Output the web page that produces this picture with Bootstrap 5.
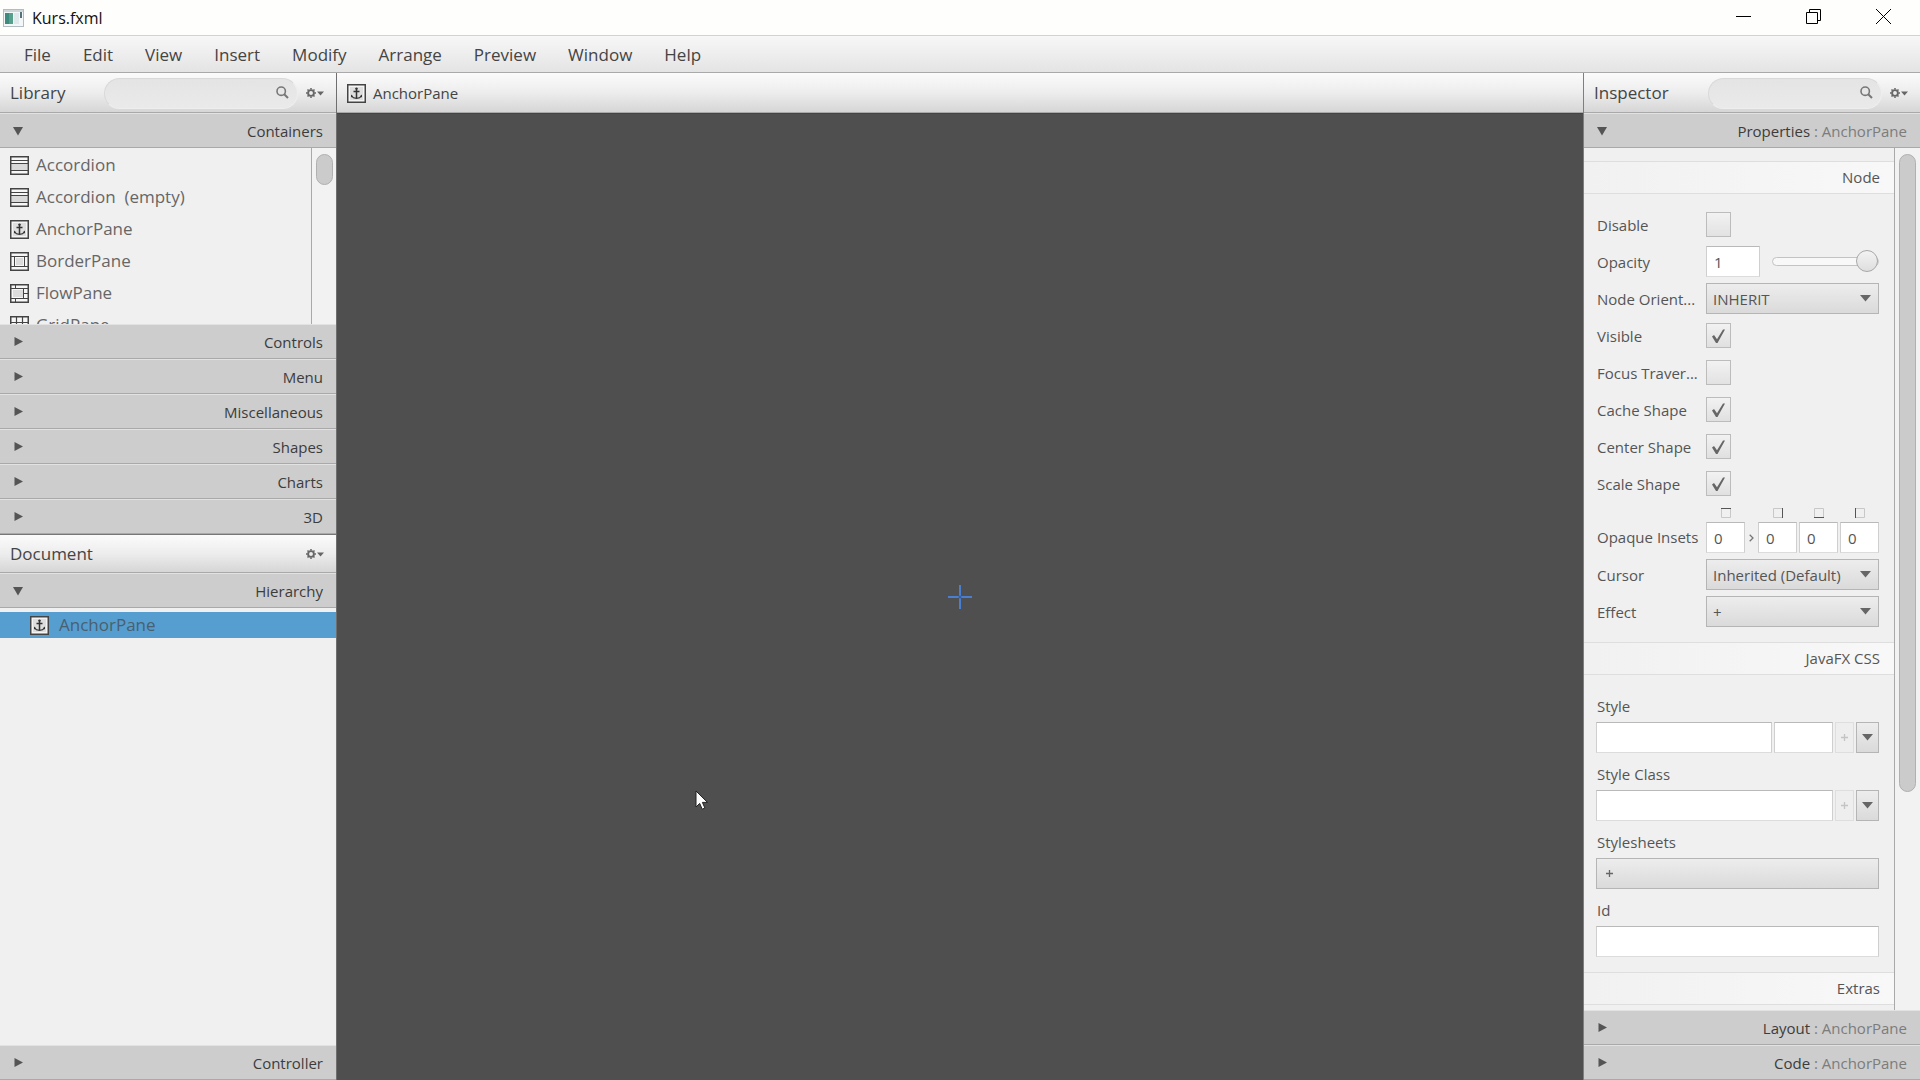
<!DOCTYPE html>
<html lang="en">
<head>
<meta charset="utf-8">
<meta name="viewport" content="width=device-width, initial-scale=1">
<title>Kurs.fxml</title>
<link href="https://cdn.jsdelivr.net/npm/bootstrap@5.3.0/dist/css/bootstrap.min.css" rel="stylesheet">
<style>
  :root { --edge:#a9a9a9; --ink:#444; --face:linear-gradient(#ededed,#dadada); }
  body { font-family:"Open Sans","Noto Sans",sans-serif; font-size:15px; line-height:20px; color:#555; background:#f0f0f0; }
  button, input, select { font-family:inherit; }
  svg { display:block; flex:none; }

  .titlebar { height:35px; background:#fefefd; color:#111; font-size:16px; padding:0 2px 0 3px; }
  .titlebar .win-btn { width:70px; height:33px; color:#000; }
  .plain-btn { border:0; background:none; padding:0; color:inherit; display:flex; align-items:center; justify-content:center; }
  .menubar { height:38px; padding:0 8px; background:linear-gradient(#f7f7f7,#e4e4e4); border-top:1px solid #d2d2d2; border-bottom:1px solid var(--edge); font-size:17px; }
  .menubar .nav-link { color:var(--ink); padding:0 16px; line-height:38px; }

  .side { width:337px; flex:none; background:#f0f0f0; }
  .side-left { border-right:1px solid #6f6f6f; }
  .side-right { border-left:1px solid #7f7f7f; }
  .panel-head { height:40px; flex:none; padding:1px 12px 0 10px; background:linear-gradient(#fbfbfb,#ededed 50%,#d6d6d6); border-bottom:1px solid var(--edge); color:var(--ink); }
  .panel-head h2 { font-size:17px; line-height:24px; font-weight:400; margin:0; }
  .panel-head.top-edge { height:39px; padding-top:0; border-top:1px solid #777; }
  .search { position:relative; width:194px; height:31px; }
  .search-right { width:174px; }
  .search input { width:100%; height:100%; border:1px solid #d9d9d9; border-bottom-color:#eee; border-right-color:#eee; border-radius:16px; background:linear-gradient(#e4e4e4,#eaeaea); padding:0 34px 0 12px; outline:0; }
  .search svg { position:absolute; right:9px; top:8px; }
  .gear { color:#666; width:18px; height:24px; }

  .section-bar { height:35px; flex:none; width:100%; border:0; border-top:1px solid #e2e2e2; border-bottom:1px solid var(--edge); background:#cdcdcd; color:#3c3c3c; padding:0 13px 0 13px; display:flex; align-items:center; justify-content:space-between; font-size:15px; line-height:20px; }
  .section-bar svg { color:#555; }
  .section-bar .target { color:#7c7c7c; }

  .library-list { height:176px; flex:none; overflow:hidden; }
  .library-list ul { padding-top:1px; font-size:17px; }
  .library-list li { height:32px; padding-left:10px; gap:7px; color:#666; white-space:pre; }
  .track { width:26px; flex:none; border-left:1px solid var(--edge); background:#f2f2f2; padding:6px 4px; }
  .library-list .track { width:25px; }
  .thumb { width:17px; border:1px solid #b0b0b0; border-radius:9px; background:#cbcbcb; }
  .thumb-lib { height:31px; }
  .thumb-insp { height:75%; }

  .tree { padding-top:4px; }
  .tree-row { height:26px; background:#569ed0; padding-left:30px; gap:10px; font-size:17px; color:#49606f; }

  .stage-head { padding-left:10px; gap:7px; font-size:15px; }
  .stage { background:#4f4f4f; position:relative; border-top:1px solid #444; }
  .pointer { position:absolute; left:28.7%; top:70%; }

  .group-title { height:33px; flex:none; margin:0; padding:0 14px; border-top:1px solid #dedede; border-bottom:1px solid #dedede; background:linear-gradient(90deg,#f1f1f1,#f8f8f8); font-size:15px; line-height:31px; font-weight:400; text-align:right; color:#555; }
  .group-title.first { margin-top:13px; }
  .props { padding:12px 15px 12px 13px; }
  .prop { height:37px; }
  .prop > label, .prop > .cap { width:109px; flex:none; white-space:nowrap; }
  .prop-tall { height:54px; align-items:flex-end; padding-bottom:3px; }
  .prop-tall > .cap { line-height:31px; }
  .field, .pick, .push { height:31px; border:1px solid #c4c4c4; border-radius:0; font-size:15px; line-height:20px; color:#555; outline:0; }
  .field { background:#fff; border-color:#b9b9b9 #cfcfcf #dcdcdc; padding:0 7px; min-width:0; }
  .field-op { width:54px; }
  .field-in { width:39px; }
  .field-unit { width:59px; flex:none; }
  .pick { flex:1; min-width:0; appearance:none; padding:0 30px 0 6px; border-color:#b5b5b5; background:url("data:image/svg+xml,%3Csvg xmlns='http://www.w3.org/2000/svg' width='11' height='7'%3E%3Cpath d='M0 0h11L5.500 6.500z' fill='%23666'/%3E%3C/svg%3E") no-repeat right 7px center, var(--face); }
  .push { background:var(--face); border-color:#b5b5b5; padding:0; display:flex; align-items:center; justify-content:center; color:#666; flex:none; }
  .push:disabled { background:#eeeeee; border-color:#dedede; color:#c4c4c4; }
  .push-add { width:19px; }
  .push-drop { width:23px; }
  .push-wide { width:100%; justify-content:flex-start; padding-left:8px; }
  .tick { appearance:none; width:25px; height:25px; margin:0; border:1px solid #bcbcbc; background:linear-gradient(#f2f2f2,#e2e2e2); }
  .tick:checked { background:url("data:image/svg+xml,%3Csvg xmlns='http://www.w3.org/2000/svg' width='13' height='14'%3E%3Cpath d='M0 7.500 2 6l3 4.200L11 .5h2L5.500 14H4z' fill='%23666'/%3E%3C/svg%3E") no-repeat center, linear-gradient(#f2f2f2,#e0e0e0); }
  .slide { appearance:none; width:107px; height:22px; margin:0 0 0 12px; background:none; }
  .slide::-webkit-slider-runnable-track { height:9px; border:1px solid #c3c3c3; border-radius:5px; background:#f8f8f8; }
  .slide::-webkit-slider-thumb { appearance:none; width:22px; height:22px; margin-top:-8px; border:1px solid #a8a8a8; border-radius:50%; background:linear-gradient(#f3f3f3,#dedede); }
  .inset { display:flex; flex-direction:column; align-items:center; gap:4px; }
  .chev { width:13px; height:31px; display:flex; align-items:center; justify-content:center; }
  .css-props { padding:10px 15px 15px 12px; }
  .css-props label, .css-props .cap { display:block; height:22px; line-height:20px; margin:11px 0 4px 1px; }
  .css-row { gap:2px; }
</style>
<script src="https://cdn.jsdelivr.net/npm/bootstrap@5.3.0/dist/js/bootstrap.bundle.min.js"></script>
</head>
<body class="vh-100 d-flex flex-column overflow-hidden">

<!-- shared symbols -->
<svg width="0" height="0" class="position-absolute" aria-hidden="true">
  <symbol id="i-anchor" viewBox="0 0 19 19"><rect x=".75" y=".75" width="17.500" height="17.500" fill="#f4f4f4" stroke="#444" stroke-width="1.500"/><rect x="3" y="3" width="13" height="13" fill="#dedede"/><path d="M9.500 4v10M6.500 7.500h6" fill="none" stroke="#333" stroke-width="1.500"/><path d="M4.500 12c1 1.600 2.800 2.300 5 2.300s4-.7 5-2.300" fill="none" stroke="#333" stroke-width="1.300"/><path d="M4 13.500v-3l2.200 1.800zM15 13.500v-3l-2.200 1.800z" fill="#333"/><circle cx="9.500" cy="4.600" r="1.200" fill="#333"/></symbol>
  <symbol id="i-accordion" viewBox="0 0 19 19"><rect x=".75" y=".75" width="17.500" height="17.500" fill="#f7f7f7" stroke="#444" stroke-width="1.500"/><path fill="#d9d9d9" d="M2 8h15v6H2z"/><path d="M1 4.500h17M1 7.500h17M1 14.500h17" stroke="#444"/></symbol>
  <symbol id="i-border" viewBox="0 0 19 19"><rect x=".75" y=".75" width="17.500" height="17.500" fill="#f7f7f7" stroke="#444" stroke-width="1.500"/><path fill="#dcdcdc" d="M6 6h7v7H6z"/><path d="M1 4.500h17M1 14.500h17M4.500 4.500v10M14.500 4.500v10" stroke="#444"/></symbol>
  <symbol id="i-flow" viewBox="0 0 19 19"><rect x=".75" y=".75" width="17.500" height="17.500" fill="#f7f7f7" stroke="#444" stroke-width="1.500"/><path fill="#dcdcdc" d="M3 6h10v7H3z"/><path d="M1 4.500h17M1 14.500h17M5.500 1v3.500M13.500 4.500v10M5.500 14.500V18M13.500 9.500H18" stroke="#444"/></symbol>
  <symbol id="i-grid" viewBox="0 0 19 19"><rect x=".75" y=".75" width="17.500" height="17.500" fill="#f7f7f7" stroke="#444" stroke-width="1.500"/><path d="M6.500 1v17M12.500 1v17M1 6.500h17M1 12.500h17" stroke="#444" stroke-width="1.200"/></symbol>
  <symbol id="i-search" viewBox="0 0 13 13"><circle cx="5.200" cy="5.200" r="4.200" fill="none" stroke="#777" stroke-width="1.600"/><path d="M8.200 8.200 12 12" stroke="#777" stroke-width="2"/></symbol>
  <symbol id="i-gear" viewBox="0 0 18 10"><circle cx="5" cy="5" r="2.900" fill="none" stroke="currentColor" stroke-width="1.900"/><path d="M5 0v1.500M5 8.500V10M0 5h1.500M8.500 5H10M1.500 1.500l1 1M7.500 7.500l1 1M8.500 1.500l-1 1M2.500 7.500l-1 1" stroke="currentColor" stroke-width="1.500"/><path d="M11 3.500h7L14.500 7.500z" fill="currentColor"/></symbol>
  <symbol id="i-down" viewBox="0 0 10 10"><path d="M0 1h10L5 9.500z" fill="currentColor"/></symbol>
  <symbol id="i-drop" viewBox="0 0 11 7"><path d="M0 0h11L5.500 6.500z" fill="currentColor"/></symbol>
  <symbol id="i-right" viewBox="0 0 10 10"><path d="M1.500 0 10 4.500 1.500 9z" fill="currentColor"/></symbol>
  <symbol id="i-plus" viewBox="0 0 9 9"><path d="M4.500 1v7M1 4.500h7" stroke="currentColor" stroke-width="1.300"/></symbol>
</svg>

<header class="titlebar d-flex align-items-start flex-shrink-0">
  <div class="d-flex align-items-center h-100">
    <svg width="21" height="18" viewBox="0 0 21 18"><rect x=".5" y=".5" width="20" height="17" fill="#f3f7f8" stroke="#b3bcc2"/><path fill="#cfd6da" d="M1 1h19v2H1z"/><path fill="#57a08a" d="M2 4h8v11H2z"/><path fill="#3d8a80" d="M2 4h4v11H2z"/><path fill="#dfe8ea" d="M11 4h5v11h-5z"/><path fill="#56707c" d="M17 3h2v6h-2z"/></svg>
    <span class="ms-2">Kurs.fxml</span>
  </div>
  <div class="ms-auto d-flex">
    <button class="plain-btn win-btn" aria-label="Minimize"><svg width="15" height="15" viewBox="0 0 15 15"><path d="M0 7.500h15" stroke="#000"/></svg></button>
    <button class="plain-btn win-btn" aria-label="Restore"><svg width="15" height="15" viewBox="0 0 15 15"><path d="M.5 3.500h11v11H.5zM3.500 3.500v-3h11v11h-3" fill="none" stroke="#000"/></svg></button>
    <button class="plain-btn win-btn" aria-label="Close"><svg width="15" height="15" viewBox="0 0 15 15"><path d="m0 0 15 15M15 0 0 15" stroke="#000"/></svg></button>
  </div>
</header>

<nav class="menubar nav flex-nowrap flex-shrink-0">
  <a class="nav-link" href="#">File</a><a class="nav-link" href="#">Edit</a><a class="nav-link" href="#">View</a><a class="nav-link" href="#">Insert</a><a class="nav-link" href="#">Modify</a><a class="nav-link" href="#">Arrange</a><a class="nav-link" href="#">Preview</a><a class="nav-link" href="#">Window</a><a class="nav-link" href="#">Help</a>
</nav>

<div class="d-flex flex-grow-1 overflow-hidden">

  <aside class="side side-left d-flex flex-column">
    <div class="panel-head d-flex align-items-center">
      <h2>Library</h2>
      <div class="search ms-auto"><input type="text" aria-label="Search library"><svg width="13" height="13"><use href="#i-search"/></svg></div>
      <button class="plain-btn gear ms-2" aria-label="Library options"><svg width="18" height="10"><use href="#i-gear"/></svg></button>
    </div>
    <button class="section-bar"><svg width="10" height="10"><use href="#i-down"/></svg>Containers</button>
    <div class="library-list d-flex">
      <ul class="list-unstyled m-0 flex-grow-1">
        <li class="d-flex align-items-center"><svg width="19" height="19"><use href="#i-accordion"/></svg>Accordion</li>
        <li class="d-flex align-items-center"><svg width="19" height="19"><use href="#i-accordion"/></svg>Accordion  (empty)</li>
        <li class="d-flex align-items-center"><svg width="19" height="19"><use href="#i-anchor"/></svg>AnchorPane</li>
        <li class="d-flex align-items-center"><svg width="19" height="19"><use href="#i-border"/></svg>BorderPane</li>
        <li class="d-flex align-items-center"><svg width="19" height="19"><use href="#i-flow"/></svg>FlowPane</li>
        <li class="d-flex align-items-center"><svg width="19" height="19"><use href="#i-grid"/></svg>GridPane</li>
      </ul>
      <div class="track"><div class="thumb thumb-lib"></div></div>
    </div>
    <button class="section-bar"><svg width="10" height="10"><use href="#i-right"/></svg>Controls</button>
    <button class="section-bar"><svg width="10" height="10"><use href="#i-right"/></svg>Menu</button>
    <button class="section-bar"><svg width="10" height="10"><use href="#i-right"/></svg>Miscellaneous</button>
    <button class="section-bar"><svg width="10" height="10"><use href="#i-right"/></svg>Shapes</button>
    <button class="section-bar"><svg width="10" height="10"><use href="#i-right"/></svg>Charts</button>
    <button class="section-bar"><svg width="10" height="10"><use href="#i-right"/></svg>3D</button>

    <div class="panel-head top-edge d-flex align-items-center">
      <h2>Document</h2>
      <button class="plain-btn gear ms-auto" aria-label="Document options"><svg width="18" height="10"><use href="#i-gear"/></svg></button>
    </div>
    <button class="section-bar"><svg width="10" height="10"><use href="#i-down"/></svg>Hierarchy</button>
    <div class="tree flex-grow-1">
      <div class="tree-row d-flex align-items-center"><svg width="19" height="19"><use href="#i-anchor"/></svg>AnchorPane</div>
    </div>
    <button class="section-bar"><svg width="10" height="10"><use href="#i-right"/></svg>Controller</button>
  </aside>

  <main class="flex-grow-1 d-flex flex-column">
    <div class="panel-head stage-head d-flex align-items-center"><svg width="19" height="19"><use href="#i-anchor"/></svg>AnchorPane</div>
    <div class="stage flex-grow-1 d-flex align-items-center justify-content-center">
      <svg width="24" height="24" viewBox="0 0 24 24"><path d="M12 0v24M0 12h24" stroke="#4a7fd0" stroke-width="2"/><circle cx="12" cy="12" r="1.500" fill="#3560a8"/></svg>
      <svg class="pointer" width="14" height="21" viewBox="0 0 14 21"><path d="M1 1v16l3.700-3.600 2.500 5.800 2.700-1.200-2.500-5.600H12.500z" fill="#fff" stroke="#222"/></svg>
    </div>
  </main>

  <aside class="side side-right d-flex flex-column">
    <div class="panel-head d-flex align-items-center">
      <h2>Inspector</h2>
      <div class="search search-right ms-auto"><input type="text" aria-label="Search properties"><svg width="13" height="13"><use href="#i-search"/></svg></div>
      <button class="plain-btn gear ms-2" aria-label="Inspector options"><svg width="18" height="10"><use href="#i-gear"/></svg></button>
    </div>
    <button class="section-bar"><svg width="10" height="10"><use href="#i-down"/></svg><span>Properties <span class="target">: AnchorPane</span></span></button>

    <div class="d-flex flex-grow-1 overflow-hidden">
      <form class="flex-grow-1 overflow-hidden">
        <h3 class="group-title first">Node</h3>
        <div class="props">
          <div class="prop d-flex align-items-center"><label for="p-dis">Disable</label><input class="tick" type="checkbox" id="p-dis"></div>
          <div class="prop d-flex align-items-center"><label for="p-op">Opacity</label><input class="field field-op" type="text" id="p-op" value="1"><input class="slide" type="range" min="0" max="1" step="0.1" value="1" aria-label="Opacity"></div>
          <div class="prop d-flex align-items-center"><label for="p-or">Node Orient...</label><select class="pick" id="p-or"><option>INHERIT</option></select></div>
          <div class="prop d-flex align-items-center"><label for="p-vis">Visible</label><input class="tick" type="checkbox" id="p-vis" checked></div>
          <div class="prop d-flex align-items-center"><label for="p-foc">Focus Traver...</label><input class="tick" type="checkbox" id="p-foc"></div>
          <div class="prop d-flex align-items-center"><label for="p-cac">Cache Shape</label><input class="tick" type="checkbox" id="p-cac" checked></div>
          <div class="prop d-flex align-items-center"><label for="p-cen">Center Shape</label><input class="tick" type="checkbox" id="p-cen" checked></div>
          <div class="prop d-flex align-items-center"><label for="p-sca">Scale Shape</label><input class="tick" type="checkbox" id="p-sca" checked></div>
          <div class="prop prop-tall d-flex">
            <span class="cap">Opaque Insets</span>
            <div class="inset"><svg width="10" height="10" viewBox="0 0 10 10"><path d="M.5.5v9h9v-9" fill="none" stroke="#c8c8c8"/><path d="M0 .5h10" stroke="#555"/></svg><input class="field field-in" type="text" value="0" aria-label="Top inset"></div>
            <span class="chev"><svg width="5" height="8" viewBox="0 0 5 8"><path d="m.7.7 3.300 3.300L.7 7.300" fill="none" stroke="#777" stroke-width="1.300"/></svg></span>
            <div class="d-flex flex-grow-1 justify-content-between">
              <div class="inset"><svg width="10" height="10" viewBox="0 0 10 10"><path d="M9.500.5h-9v9h9" fill="none" stroke="#c8c8c8"/><path d="M9.500 0v10" stroke="#555"/></svg><input class="field field-in" type="text" value="0" aria-label="Right inset"></div>
              <div class="inset"><svg width="10" height="10" viewBox="0 0 10 10"><path d="M.5 9.500v-9h9v9" fill="none" stroke="#c8c8c8"/><path d="M0 9.500h10" stroke="#555"/></svg><input class="field field-in" type="text" value="0" aria-label="Bottom inset"></div>
              <div class="inset"><svg width="10" height="10" viewBox="0 0 10 10"><path d="M.5.5h9v9h-9" fill="none" stroke="#c8c8c8"/><path d="M.5 0v10" stroke="#555"/></svg><input class="field field-in" type="text" value="0" aria-label="Left inset"></div>
            </div>
          </div>
          <div class="prop d-flex align-items-center"><label for="p-cur">Cursor</label><select class="pick" id="p-cur"><option>Inherited (Default)</option></select></div>
          <div class="prop d-flex align-items-center"><label for="p-eff">Effect</label><select class="pick" id="p-eff"><option>+</option></select></div>
        </div>

        <h3 class="group-title">JavaFX CSS</h3>
        <div class="css-props">
          <label for="c-sty">Style</label>
          <div class="css-row d-flex">
            <input class="field flex-grow-1" type="text" id="c-sty"><input class="field field-unit" type="text" aria-label="Style value">
            <button type="button" class="push push-add" disabled aria-label="Add style"><svg width="9" height="9"><use href="#i-plus"/></svg></button>
            <button type="button" class="push push-drop" aria-label="Style menu"><svg width="11" height="7"><use href="#i-drop"/></svg></button>
          </div>
          <label for="c-cls">Style Class</label>
          <div class="css-row d-flex">
            <input class="field flex-grow-1" type="text" id="c-cls">
            <button type="button" class="push push-add" disabled aria-label="Add class"><svg width="9" height="9"><use href="#i-plus"/></svg></button>
            <button type="button" class="push push-drop" aria-label="Class menu"><svg width="11" height="7"><use href="#i-drop"/></svg></button>
          </div>
          <span class="cap">Stylesheets</span>
          <button type="button" class="push push-wide" aria-label="Add stylesheet"><svg width="9" height="9"><use href="#i-plus"/></svg></button>
          <label for="c-id">Id</label>
          <input class="field w-100" type="text" id="c-id">
        </div>
        <h3 class="group-title">Extras</h3>
      </form>
      <div class="track"><div class="thumb thumb-insp"></div></div>
    </div>

    <button class="section-bar"><svg width="10" height="10"><use href="#i-right"/></svg><span>Layout <span class="target">: AnchorPane</span></span></button>
    <button class="section-bar"><svg width="10" height="10"><use href="#i-right"/></svg><span>Code <span class="target">: AnchorPane</span></span></button>
  </aside>
</div>
</body>
</html>
